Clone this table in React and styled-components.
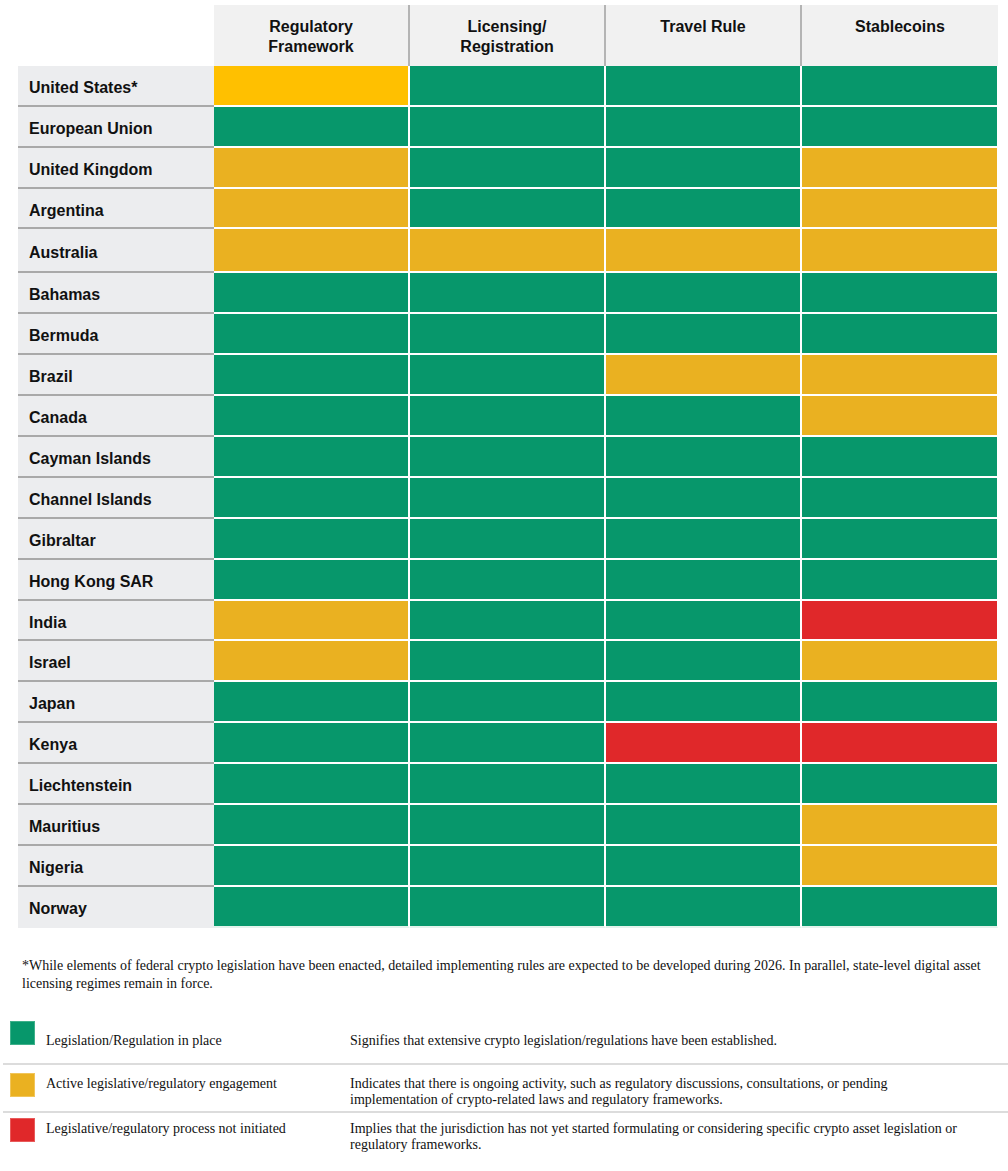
import React from "react";
import styled, { createGlobalStyle } from "styled-components";

const GlobalStyle = createGlobalStyle`
  html, body { margin: 0; padding: 0; background: #ffffff; }
  * { box-sizing: border-box; }
`;

const COLORS = {
  G: "#07976b",
  Y: "#eab121",
  U: "#ffc000",
  R: "#e0282a",
};

const headers = [
  ["Regulatory", "Framework"],
  ["Licensing/", "Registration"],
  ["Travel Rule"],
  ["Stablecoins"],
];

const rows = [
  ["United States*", "UGGG", 41],
  ["European Union", "GGGG", 41],
  ["United Kingdom", "YGGY", 41],
  ["Argentina", "YGGY", 40],
  ["Australia", "YYYY", 44],
  ["Bahamas", "GGGG", 41],
  ["Bermuda", "GGGG", 41],
  ["Brazil", "GGYY", 41],
  ["Canada", "GGGY", 41],
  ["Cayman Islands", "GGGG", 41],
  ["Channel Islands", "GGGG", 41],
  ["Gibraltar", "GGGG", 41],
  ["Hong Kong SAR", "GGGG", 41],
  ["India", "YGGR", 40],
  ["Israel", "YGGY", 41],
  ["Japan", "GGGG", 41],
  ["Kenya", "GGRR", 41],
  ["Liechtenstein", "GGGG", 41],
  ["Mauritius", "GGGY", 41],
  ["Nigeria", "GGGY", 41],
  ["Norway", "GGGG", 41],
];

const legend = [
  {
    color: "G",
    label: "Legislation/Regulation in place",
    desc: "Signifies that extensive crypto legislation/regulations have been established.",
    first: true,
    pad: 7,
  },
  {
    color: "Y",
    label: "Active legislative/regulatory engagement",
    desc: "Indicates that there is ongoing activity, such as regulatory discussions, consultations, or pending implementation of crypto-related laws and regulatory frameworks.",
    pad: 8,
  },
  {
    color: "R",
    label: "Legislative/regulatory process not initiated",
    desc: "Implies that the jurisdiction has not yet started formulating or considering specific crypto asset legislation or regulatory frameworks.",
    pad: 5,
  },
];

const SWATCH_BORDER = { G: "#3fb08a", Y: "#f1c55a", R: "#e85a5a" };

const Page = styled.div`
  width: 1008px;
  padding-top: 5px;
  font-family: "Liberation Sans", Arial, sans-serif;
  color: #111;
`;

const Table = styled.div`
  margin-left: 18px;
  width: 980px;
  display: grid;
  grid-template-columns: repeat(5, 196px);
`;

const Blank = styled.div`
  background: #ffffff;
`;

const HeaderCell = styled.div`
  height: 61px;
  background: #f1f1f1;
  padding-top: 12px;
  text-align: center;
  font-weight: bold;
  font-size: 16px;
  line-height: 20px;
  border-right: ${(p) => (p.$last ? "none" : "2px solid #b4b4b4")};
`;

const CountryCell = styled.div`
  height: ${(p) => p.$h}px;
  background: #ecedef;
  padding: 5px 0 0 11px;
  display: flex;
  align-items: center;
  font-weight: bold;
  font-size: 16px;
  border-bottom: 2px solid ${(p) => (p.$last ? "transparent" : "#a9a9a9")};
`;

const StatusCell = styled.div`
  height: ${(p) => p.$h}px;
  background: ${(p) => COLORS[p.$status]};
  background-clip: padding-box;
  border-bottom: 2px solid ${(p) => (p.$lastRow ? "#e3f3ec" : "#ffffff")};
  border-right: ${(p) => (p.$lastCol ? "1px" : "2px")} solid #ffffff;
`;

const Footnote = styled.p`
  margin: 29px 0 0 22px;
  width: 975px;
  font-family: "Liberation Serif", "Times New Roman", serif;
  font-size: 14px;
  line-height: 18px;
  color: #111;
`;

const Legend = styled.div`
  margin-top: 21px;
  display: flex;
  flex-direction: column;
`;

const LegendRow = styled.div`
  display: grid;
  grid-template-columns: 43px 304px 625px;
  align-items: start;
  margin-left: 3px;
  width: 1005px;
  padding: ${(p) => p.$pad}px 0 ${(p) => (p.$first ? 0 : 3)}px 0;
  min-height: ${(p) => (p.$first ? "51px" : "0")};
  border-bottom: ${(p) => (p.$last ? "none" : "2px solid #dcdcdc")};
`;

const Swatch = styled.div`
  width: 25px;
  height: 24px;
  margin-left: 7px;
  background: ${(p) => COLORS[p.$color]};
  border: 1px solid ${(p) => SWATCH_BORDER[p.$color]};
`;

const LegendText = styled.div`
  font-family: "Liberation Serif", "Times New Roman", serif;
  font-size: 14px;
  line-height: 16px;
  color: #111;
  padding-top: ${(p) => (p.$first ? 12 : 3)}px;
`;

export default function App() {
  return (
    <>
      <GlobalStyle />
      <Page>
        <Table>
          <Blank />
          {headers.map((lines, i) => (
            <HeaderCell key={lines.join(" ")} $last={i === headers.length - 1}>
              {lines.map((l, j) => (
                <React.Fragment key={l}>
                  {l}
                  {j < lines.length - 1 && <br />}
                </React.Fragment>
              ))}
            </HeaderCell>
          ))}
          {rows.map(([name, statuses, h], r) => (
            <React.Fragment key={name}>
              <CountryCell $h={h} $last={r === rows.length - 1}>
                {name}
              </CountryCell>
              {statuses.split("").map((s, c) => (
                <StatusCell
                  key={c}
                  $h={h}
                  $status={s}
                  $lastRow={r === rows.length - 1}
                  $lastCol={c === 3}
                />
              ))}
            </React.Fragment>
          ))}
        </Table>
        <Footnote>
          *While elements of federal crypto legislation have been enacted, detailed implementing rules are expected to be
          developed during 2026. In parallel, state-level digital asset licensing regimes remain in force.
        </Footnote>
        <Legend>
          {legend.map((item, i) => (
            <LegendRow key={item.label} $pad={item.pad} $first={item.first} $last={i === legend.length - 1}>
              <Swatch $color={item.color} />
              <LegendText $first={item.first}>{item.label}</LegendText>
              <LegendText $first={item.first}>{item.desc}</LegendText>
            </LegendRow>
          ))}
        </Legend>
      </Page>
    </>
  );
}
